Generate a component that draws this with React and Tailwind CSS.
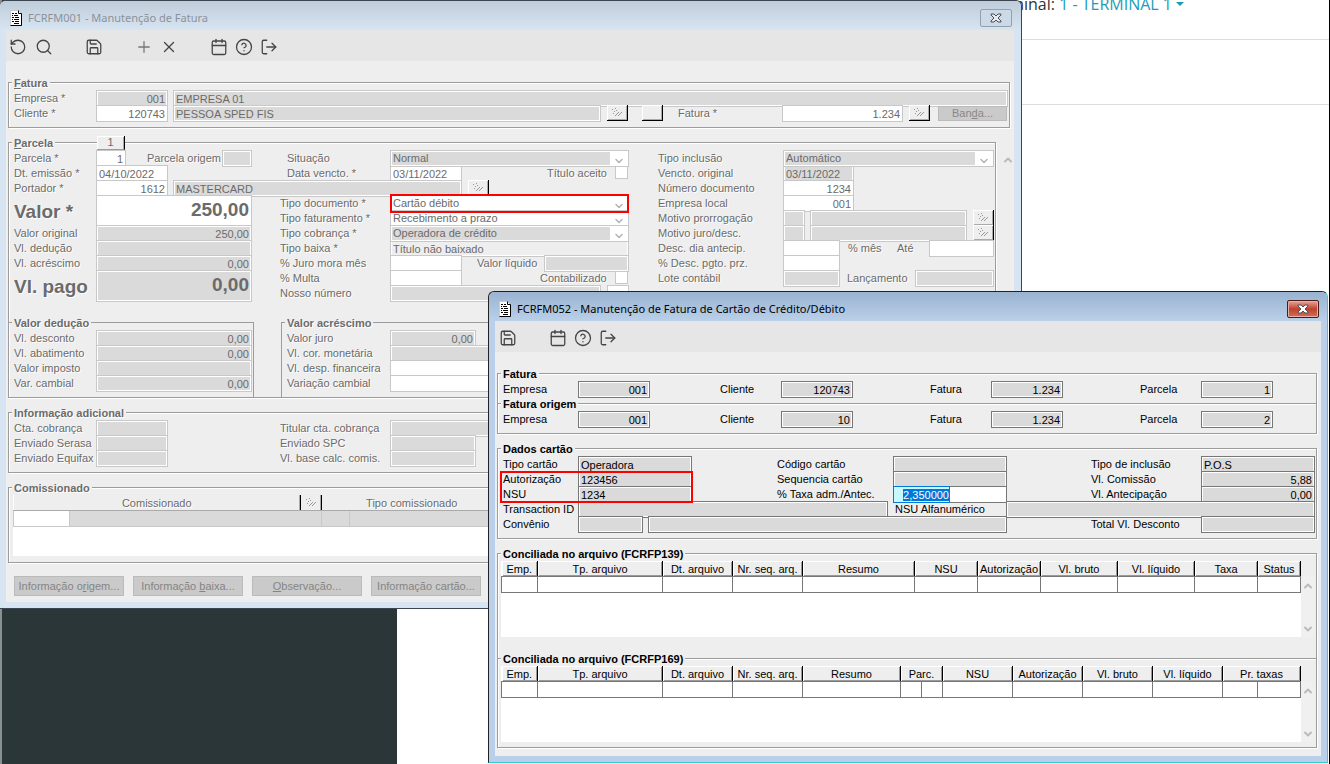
import React, { useEffect, useRef } from 'react';
import {
  Calendar,
  ChevronDown,
  ChevronUp,
  CircleHelp,
  LogOut,
  Plus,
  RotateCcw,
  Save,
  Search,
  X,
} from 'lucide-react';

const Label = ({ id, className = '', children }) => (
  <label htmlFor={id} className={`shrink-0 whitespace-nowrap leading-[17px] ${className}`}>
    {children}
  </label>
);

const tones = {
  gray: 'bg-[#dadada]',
  white: 'bg-white',
  flat: 'bg-[#eee]',
};

const Field = ({ id, label, value = '', tone = 'gray', right, big, className = '' }) => (
  <input
    id={id}
    aria-label={label}
    defaultValue={value}
    readOnly={tone !== 'white'}
    className={`block min-w-0 border border-(--line) px-0.5 shadow-[inset_0_0_0_1px_#fff] outline-none ${big ? 'h-8 pb-0.5 text-[19px] font-bold' : 'h-[17px] pt-px leading-[13px]'} ${tones[tone]} ${right ? 'text-right' : ''} ${className}`}
  />
);

const Select = ({ id, value, tone = 'gray', className = '' }) => (
  <div className={`relative h-[17px] ${className}`}>
    <select
      id={id}
      className={`block h-[17px] w-full appearance-none border border-(--line) px-0.5 leading-[13px] shadow-[inset_0_0_0_1px_#fff] outline-none ${tones[tone]}`}
    >
      <option>{value}</option>
    </select>
    <span className="pointer-events-none absolute inset-y-px right-px flex w-[18px] items-center justify-center bg-white">
      <ChevronDown className="mt-1 size-3 text-[#b4b4b4]" strokeWidth={3} />
    </span>
  </div>
);

const Check = ({ id }) => (
  <input
    id={id}
    type="checkbox"
    className="mt-px block size-[13px] shrink-0 appearance-none border border-(--line) bg-white"
  />
);

const PencilDots = () => (
  <svg viewBox="0 0 12 9" className="h-[9px] w-3" fill="#999" shapeRendering="crispEdges">
    <path d="M1 1h1v1h-1zM3 3h1v1h-1zM4 0h1v1h-1zM5 2h1v1h-1zM2 5h1v1h-1z" />
    <path d="M7 4h1v1h-1zM6 5h1v1h-1zM5 6h1v1h-1zM4 7h1v1h-1zM10 4h1v1h-1zM9 5h1v1h-1zM8 6h1v1h-1zM7 7h1v1h-1z" />
  </svg>
);

const LookupButton = ({ label, empty, className = '' }) => (
  <button
    type="button"
    aria-label={label}
    className={`flex h-4 w-[21px] shrink-0 items-center justify-center border-r border-b border-black bg-[#eee] shadow-[inset_1px_1px_0_#fff,inset_-1px_-1px_0_#aaa] ${className}`}
  >
    {!empty && <PencilDots />}
  </button>
);

const Row = ({ className = '', children }) => (
  <div className={`flex h-[15px] items-start ${className}`}>{children}</div>
);

const Group = ({ title, border = 'border', inner, className = '', bodyClass = '', children }) => (
  <fieldset
    className={`min-w-0 border-[#9c9c9c] ${inner ? '' : 'shadow-[1px_1px_0_#fff,inset_1px_1px_0_#fff]'} ${border} ${className}`}
  >
    <legend className="ml-[3px] h-[15px] bg-[#eee] px-0.5 text-[11px] leading-[17px] font-bold whitespace-nowrap">
      {title}
    </legend>
    <div className={bodyClass}>{children}</div>
  </fieldset>
);

const DocIcon = () => (
  <svg viewBox="0 0 12 16" className="h-4 w-3">
    <path d="M0.5 0.5h8l3 3v12h-11z" fill="#fff" stroke="#ccc" />
    <path d="M11.5 3.5v12h-11" fill="none" stroke="#000" />
    <path d="M8.5 0.5v3h3" fill="none" stroke="#000" />
    <path
      d="M2 3.5h2M5 3.5h2M2 5.5h1M4 5.5h4M2 7.5h2M5 7.5h4M2 9.5h1M4 9.5h5M2 11.5h2M5 11.5h4M4 13.5h5"
      stroke="#000"
      strokeWidth="1.2"
    />
  </svg>
);

const CloseGlyph = ({ fill }) => (
  <svg viewBox="0 0 12 10" className="h-[10px] w-3">
    <path
      d="M1 1h3l2 2 2-2h3v1L8 5l3 3v1H8L6 7 4 9H1V8l3-3-3-3z"
      fill={fill}
      stroke="#4a4f5c"
      strokeWidth="1"
    />
  </svg>
);

const ToolButton = ({ icon: Icon, label, color = 'text-[#444]', className = '' }) => (
  <button type="button" aria-label={label} className={`${color} ${className}`}>
    <Icon className="size-[18px]" strokeWidth={1.7} />
  </button>
);

const ScrollBar = ({ down, className = '' }) => (
  <div className={`flex w-[13px] shrink-0 flex-col items-center justify-between text-[#bbb] ${className}`}>
    <ChevronUp className="size-3" strokeWidth={4} />
    {down && <ChevronDown className="size-3" strokeWidth={4} />}
  </div>
);

const FaturaWindow = () => (
  <section className="absolute top-0 right-[307px] left-0 rounded-t-md border-t border-r border-b border-[#3c4650] bg-[#d7e4f2] pr-[7px] pb-1.5 pl-1.5 text-[#6b6b6b] [--line:#c8c8c8]">
    <div className="-mr-[7px] -ml-1.5 flex h-[29px] items-center rounded-t-md bg-linear-to-b from-[#bfcddb] to-[#d7e4f2] pt-1 pr-[9px] pl-2.5">
      <DocIcon />
      <h1 className="ml-1.5 flex-1 font-['Noto_Sans',sans-serif] text-[11px] text-[#8b929a]">
        FCRFM001 - Manutenção de Fatura
      </h1>
      <button
        type="button"
        aria-label="Fechar"
        className="flex h-[18px] w-8 items-center justify-center rounded-xs border border-[#94a0ae] bg-[#ccd9e6]"
      >
        <CloseGlyph fill="#e8ecf0" />
      </button>
    </div>
    <div className="bg-[#eee]">
      <div className="flex h-[31px] items-center bg-[#e6e6e6] pt-0.5 pl-[3px]">
        <ToolButton icon={RotateCcw} label="Desfazer" />
        <ToolButton icon={Search} label="Pesquisar" className="ml-2" />
        <ToolButton icon={Save} label="Salvar" className="ml-8" />
        <ToolButton icon={Plus} label="Incluir" color="text-[#777]" className="ml-8" />
        <ToolButton icon={X} label="Excluir" className="ml-[7px]" />
        <ToolButton icon={Calendar} label="Calendário" className="ml-8" />
        <ToolButton icon={CircleHelp} label="Ajuda" className="ml-[7px]" />
        <ToolButton icon={LogOut} label="Sair" className="ml-[7px]" />
      </div>

      <div className="pt-[14px] pr-1 pl-0.5 [text-shadow:1px_1px_0_#fff]">
        <Group title={<><u>F</u>atura</>} bodyClass="pr-px pb-[7px] pl-[5px]">
          <Row>
            <Label id="empresa" className="w-[82px]">Empresa *</Label>
            <Field id="empresa" value="001" right className="w-[72px]" />
            <Field label="Nome da empresa" value="EMPRESA 01" className="ml-[5px] flex-1" />
          </Row>
          <Row>
            <Label id="cliente" className="w-[82px]">Cliente *</Label>
            <Field id="cliente" value="120743" right tone="white" className="w-[72px]" />
            <Field label="Nome do cliente" value="PESSOA SPED FIS" className="ml-[5px] flex-1" />
            <LookupButton label="Buscar cliente" className="ml-1.5" />
            <LookupButton label="Detalhe do cliente" empty className="ml-[14px]" />
            <Label id="fatura" className="ml-[15px] w-[104px]">Fatura *</Label>
            <Field id="fatura" value="1.234" right tone="white" className="w-[121px]" />
            <LookupButton label="Buscar fatura" className="ml-1.5" />
            <button
              type="button"
              className="mt-px mr-px ml-2 h-[15px] w-[69px] border border-[#bbb] bg-[#cacaca] leading-[13px] text-[#888] [text-shadow:none]"
            >
              Ban<u>d</u>a...
            </button>
          </Row>
        </Group>

        <div className="mt-[7px] -mr-1 flex">
          <div className="relative min-w-0 flex-1">
            <Group title={<><u>P</u>arcela</>}>
              <div className="flex pl-[5px]">
                <div className="w-[644px] shrink-0">
                  <Row>
                    <Label id="parcela" className="w-[82px]">Parcela *</Label>
                    <Field id="parcela" value="1" right tone="white" className="w-[30px]" />
                    <Label id="parcela-origem" className="ml-[21px] w-[75px]">Parcela origem</Label>
                    <Field id="parcela-origem" className="w-[30px]" />
                    <Label id="situacao" className="ml-[35px] w-[103px]">Situação</Label>
                    <Select id="situacao" value="Normal" className="w-[239px]" />
                  </Row>
                  <Row>
                    <Label id="emissao" className="w-[82px]">Dt. emissão *</Label>
                    <Field id="emissao" value="04/10/2022" tone="white" className="w-[72px]" />
                    <Label id="vencto" className="ml-[119px] w-[103px]">Data vencto. *</Label>
                    <Field id="vencto" value="03/11/2022" tone="white" className="w-[72px]" />
                    <Label id="aceito" className="ml-[85px] w-[68px]">Título aceito</Label>
                    <Check id="aceito" />
                  </Row>
                  <Row>
                    <Label id="portador" className="w-[82px]">Portador *</Label>
                    <Field id="portador" value="1612" right tone="white" className="w-[72px]" />
                    <Field label="Nome do portador" value="MASTERCARD" className="ml-[5px] w-[289px]" />
                    <LookupButton label="Buscar portador" className="ml-1.5" />
                  </Row>
                  <div className="flex">
                    <div className="w-[266px]">
                      <div className="flex h-[30px]">
                        <Label id="valor" className="w-[82px] pt-2 text-[19px] font-bold">Valor *</Label>
                        <Field id="valor" value="250,00" right big tone="white" className="w-[156px]" />
                      </div>
                      <Row>
                        <Label id="valor-original" className="w-[82px]">Valor original</Label>
                        <Field id="valor-original" value="250,00" right className="w-[156px]" />
                      </Row>
                      <Row>
                        <Label id="vl-deducao" className="w-[82px]">Vl. dedução</Label>
                        <Field id="vl-deducao" className="w-[156px]" />
                      </Row>
                      <Row>
                        <Label id="vl-acrescimo" className="w-[82px]">Vl. acréscimo</Label>
                        <Field id="vl-acrescimo" value="0,00" right className="w-[156px]" />
                      </Row>
                      <div className="flex h-[30px]">
                        <Label id="vl-pago" className="w-[82px] pt-2 text-[19px] font-bold">Vl. pago</Label>
                        <Field id="vl-pago" value="0,00" right big className="w-[156px]" />
                      </div>
                    </div>
                    <div className="w-[349px]">
                      <Row className="relative">
                        <Label id="tipo-doc" className="w-[110px]">Tipo documento *</Label>
                        <Select id="tipo-doc" value="Cartão débito" tone="white" className="flex-1" />
                        <span className="pointer-events-none absolute -top-px right-0 z-10 h-[19px] w-[239px] border-2 border-[#f00]" />
                      </Row>
                      <Row>
                        <Label id="tipo-fat" className="w-[110px]">Tipo faturamento *</Label>
                        <Select id="tipo-fat" value="Recebimento a prazo" tone="white" className="flex-1" />
                      </Row>
                      <Row>
                        <Label id="tipo-cob" className="w-[110px]">Tipo cobrança *</Label>
                        <Select id="tipo-cob" value="Operadora de crédito" className="flex-1" />
                      </Row>
                      <Row>
                        <Label id="tipo-baixa" className="w-[110px]">Tipo baixa *</Label>
                        <Field id="tipo-baixa" value="Título não baixado" tone="flat" className="flex-1" />
                      </Row>
                      <Row>
                        <Label id="juro-mora" className="w-[110px]">% Juro mora mês</Label>
                        <Field id="juro-mora" tone="white" className="w-[72px]" />
                        <Label id="valor-liquido" className="ml-[15px] w-[67px]">Valor líquido</Label>
                        <Field id="valor-liquido" className="flex-1" />
                      </Row>
                      <Row>
                        <Label id="multa" className="w-[110px]">% Multa</Label>
                        <Field id="multa" tone="white" className="w-[72px]" />
                        <Label id="contab" className="ml-[78px] w-[75px]">Contabilizado</Label>
                        <Check id="contab" />
                      </Row>
                      <Row>
                        <Label id="nosso-num" className="w-[110px]">Nosso número</Label>
                        <Field id="nosso-num" className="w-[212px]" />
                        <Field label="Dígito" tone="white" className="ml-1.5 w-[22px]" />
                      </Row>
                    </div>
                  </div>
                </div>

                <div className="min-w-0 flex-1 pr-px">
                  <Row>
                    <Label id="tipo-inc" className="w-[125px]">Tipo inclusão</Label>
                    <Select id="tipo-inc" value="Automático" className="flex-1" />
                  </Row>
                  <Row>
                    <Label id="venc-orig" className="w-[125px]">Vencto. original</Label>
                    <Field id="venc-orig" value="03/11/2022" className="w-[71px]" />
                  </Row>
                  <Row>
                    <Label id="num-doc" className="w-[125px]">Número documento</Label>
                    <Field id="num-doc" value="1234" right tone="white" className="w-[71px]" />
                  </Row>
                  <Row>
                    <Label id="emp-local" className="w-[125px]">Empresa local</Label>
                    <Field id="emp-local" value="001" right tone="white" className="w-[71px]" />
                  </Row>
                  <Row>
                    <Label id="mot-pror" className="w-[125px]">Motivo prorrogação</Label>
                    <Field id="mot-pror" className="w-[22px]" />
                    <Field label="Descrição da prorrogação" className="ml-[5px] flex-1" />
                    <LookupButton label="Buscar prorrogação" className="ml-1.5" />
                  </Row>
                  <Row>
                    <Label id="mot-juro" className="w-[125px]">Motivo juro/desc.</Label>
                    <Field id="mot-juro" className="w-[22px]" />
                    <Field label="Descrição do juro" className="ml-[5px] flex-1" />
                    <LookupButton label="Buscar juro" className="ml-1.5" />
                  </Row>
                  <Row>
                    <Label id="desc-dia" className="w-[125px]">Desc. dia antecip.</Label>
                    <Field id="desc-dia" tone="white" className="w-[57px]" />
                    <span className="ml-2 w-[49px] leading-[17px]">% mês</span>
                    <Label id="ate" className="w-8">Até</Label>
                    <Field id="ate" tone="white" className="flex-1" />
                  </Row>
                  <Row>
                    <Label id="desc-pgto" className="w-[125px]">% Desc. pgto. prz.</Label>
                    <Field id="desc-pgto" tone="white" className="w-[57px]" />
                  </Row>
                  <Row>
                    <Label id="lote" className="w-[125px]">Lote contábil</Label>
                    <Field id="lote" className="w-[57px]" />
                    <Label id="lancamento" className="ml-[7px] w-[68px]">Lançamento</Label>
                    <Field id="lancamento" className="flex-1" />
                  </Row>
                </div>
              </div>

              <div className="mt-[15px] flex">
                <Group title="Valor dedução" border="border-t border-r" inner className="w-[245px]" bodyClass="pr-px pb-[7px] pl-[5px]">
                  <Row>
                    <Label id="vl-desc" className="w-[82px]">Vl. desconto</Label>
                    <Field id="vl-desc" value="0,00" right className="flex-1" />
                  </Row>
                  <Row>
                    <Label id="vl-abat" className="w-[82px]">Vl. abatimento</Label>
                    <Field id="vl-abat" value="0,00" right className="flex-1" />
                  </Row>
                  <Row>
                    <Label id="vl-imposto" className="w-[82px]">Valor imposto</Label>
                    <Field id="vl-imposto" className="flex-1" />
                  </Row>
                  <Row>
                    <Label id="var-cambial" className="w-[82px]">Var. cambial</Label>
                    <Field id="var-cambial" value="0,00" right className="flex-1" />
                  </Row>
                </Group>
                <Group title="Valor acréscimo" border="border-t border-l" inner className="ml-[27px] flex-1" bodyClass="pb-[7px] pl-[5px]">
                  <Row>
                    <Label id="vl-juro" className="w-[103px]">Valor juro</Label>
                    <Field id="vl-juro" value="0,00" right className="w-[86px]" />
                  </Row>
                  <Row>
                    <Label id="cor-mon" className="w-[103px]">Vl. cor. monetária</Label>
                    <Field id="cor-mon" className="w-[240px]" />
                  </Row>
                  <Row>
                    <Label id="desp-fin" className="w-[103px]">Vl. desp. financeira</Label>
                    <Field id="desp-fin" tone="white" className="w-[240px]" />
                  </Row>
                  <Row>
                    <Label id="variacao" className="w-[103px]">Variação cambial</Label>
                    <Field id="variacao" tone="white" className="w-[240px]" />
                  </Row>
                </Group>
              </div>
            </Group>
            <button
              type="button"
              className="absolute top-px left-[89px] h-[14px] w-7 border-r border-b border-black border-b-[#9c9c9c] bg-[#eee] leading-[13px] shadow-[inset_1px_1px_0_#fff,inset_-1px_0_0_#aaa]"
            >
              1
            </button>
          </div>
          <ScrollBar className="ml-[5px] pt-[19px]" />
        </div>

        <Group title="Informação adicional" className="mt-[7px]" bodyClass="pb-[7px] pl-[5px]">
          <Row>
            <Label id="cta-cob" className="w-[82px]">Cta. cobrança</Label>
            <Field id="cta-cob" className="w-[72px]" />
            <Label id="titular" className="ml-28 w-[110px]">Titular cta. cobrança</Label>
            <Field id="titular" className="w-[240px]" />
          </Row>
          <Row>
            <Label id="serasa" className="w-[82px]">Enviado Serasa</Label>
            <Field id="serasa" className="w-[72px]" />
            <Label id="spc" className="ml-28 w-[110px]">Enviado SPC</Label>
            <Field id="spc" className="w-[86px]" />
          </Row>
          <Row>
            <Label id="equifax" className="w-[82px]">Enviado Equifax</Label>
            <Field id="equifax" className="w-[72px]" />
            <Label id="base-calc" className="ml-28 w-[110px]">Vl. base calc. comis.</Label>
            <Field id="base-calc" className="w-[86px]" />
          </Row>
        </Group>

        <Group title="Comissionado" className="mt-[7px]" bodyClass="px-1 pb-1.5">
          <div className="h-[61px] bg-white">
            <table className="w-full table-fixed border-collapse">
              <colgroup>
                <col className="w-14" />
                <col className="w-[231px]" />
                <col className="w-[21px]" />
                <col className="w-7" />
                <col className="w-[152px]" />
                <col />
              </colgroup>
              <thead>
                <tr className="h-[15px] bg-[#eee]">
                  <th colSpan={2} className="border-r border-b border-black border-b-[#aaa] p-0 pt-px leading-[14px] font-normal shadow-[inset_-1px_0_0_#aaa]">Comissionado</th>
                  <th className="border-r border-b border-black border-b-[#aaa] p-0 shadow-[inset_-1px_0_0_#aaa]">
                    <span className="flex justify-center"><PencilDots /></span>
                  </th>
                  <th colSpan={2} className="border-b border-[#aaa] p-0 pt-px leading-[14px] font-normal">Tipo comissionado</th>
                  <th className="border-b border-[#aaa] p-0" />
                </tr>
              </thead>
              <tbody>
                <tr className="h-4">
                  <td className="border border-(--line) bg-white p-0" />
                  <td colSpan={2} className="border border-(--line) bg-[#dadada] p-0" />
                  <td className="border border-(--line) bg-[#dadada] p-0" />
                  <td colSpan={2} className="border border-(--line) bg-[#dadada] p-0" />
                </tr>
              </tbody>
            </table>
          </div>
        </Group>

        <div className="flex gap-[9px] pt-[13px] pb-1.5 pl-1.5 text-[#858585] [text-shadow:none]">
          <button type="button" className="h-5 w-[110px] border border-[#bbb] bg-[#cacaca]">Informação o<u>r</u>igem...</button>
          <button type="button" className="h-5 w-[110px] border border-[#bbb] bg-[#cacaca]">Informação <u>b</u>aixa...</button>
          <button type="button" className="h-5 w-[110px] border border-[#bbb] bg-[#cacaca]"><u>O</u>bservação...</button>
          <button type="button" className="h-5 w-[110px] border border-[#bbb] bg-[#cacaca]">Informação cartão...</button>
        </div>
      </div>
    </div>
  </section>
);

const CardRow = ({ prefix, values }) => (
  <Row>
    <Label id={`${prefix}-empresa`} className="w-[75px]">Empresa</Label>
    <Field id={`${prefix}-empresa`} value={values[0]} right className="w-[72px]" />
    <Label id={`${prefix}-cliente`} className="ml-[70px] w-[61px]">Cliente</Label>
    <Field id={`${prefix}-cliente`} value={values[1]} right className="w-[72px]" />
    <Label id={`${prefix}-fatura`} className="ml-[77px] w-[61px]">Fatura</Label>
    <Field id={`${prefix}-fatura`} value={values[2]} right className="w-[72px]" />
    <Label id={`${prefix}-parcela`} className="ml-[77px] w-[61px]">Parcela</Label>
    <Field id={`${prefix}-parcela`} value={values[3]} right className="w-[72px]" />
  </Row>
);

// cols: [widths of the cells below the title, title]
const GridTable = ({ cols }) => (
  <div className="mr-0.5 ml-[3px] flex h-[76px]">
    <div className="min-w-0 flex-1 bg-white">
      <table className="w-full table-fixed border-collapse">
        <colgroup>
          {cols.flatMap(([widths]) => widths).map((w, i) => (
            <col key={i} style={{ width: w }} />
          ))}
        </colgroup>
        <thead>
          <tr className="h-[15px] bg-[#eee]">
            {cols.map(([widths, title]) => (
              <th
                key={title}
                colSpan={widths.length}
                className="border-r border-b border-black border-b-[#777] p-0 pt-px leading-[14px] font-normal whitespace-nowrap shadow-[inset_1px_1px_0_#fff,inset_-1px_-1px_0_#999]"
              >
                {title}
              </th>
            ))}
          </tr>
        </thead>
        <tbody>
          <tr className="h-4">
            {cols.flatMap(([widths]) => widths).map((w, i) => (
              <td key={i} className="border border-[#777] p-0" />
            ))}
          </tr>
        </tbody>
      </table>
    </div>
    <ScrollBar down className="mt-[15px] bg-[#f0f0f0] pt-1 pb-0.5" />
  </div>
);

const fcrfp139 = [
  [[36], 'Emp.'],
  [[125], 'Tp. arquivo'],
  [[70], 'Dt. arquivo'],
  [[70], 'Nr. seq. arq.'],
  [[112], 'Resumo'],
  [[63], 'NSU'],
  [[63], 'Autorização'],
  [[77], 'Vl. bruto'],
  [[77], 'Vl. líquido'],
  [[63], 'Taxa'],
  [[43], 'Status'],
];

const fcrfp169 = [
  [[36], 'Emp.'],
  [[125], 'Tp. arquivo'],
  [[70], 'Dt. arquivo'],
  [[70], 'Nr. seq. arq.'],
  [[98], 'Resumo'],
  [[21, 21], 'Parc.'],
  [[70], 'NSU'],
  [[70], 'Autorização'],
  [[70], 'Vl. bruto'],
  [[70], 'Vl. líquido'],
  [[35, 43], 'Pr. taxas'],
];

const CartaoWindow = () => {
  const taxaRef = useRef(null);

  useEffect(() => {
    taxaRef.current?.focus();
    taxaRef.current?.select();
  }, []);

  return (
    <section className="absolute top-[291px] right-px left-[488px] rounded-t-md border border-[#222] border-r-[#3cc] border-b-[#3cc] bg-[#bad0ea] px-1.5 pb-1.5 text-black [--line:#777]">
      <div className="-mx-1.5 flex h-[29px] items-center rounded-t-md bg-linear-to-b from-[#99b3d0] to-[#bad0ea] pt-1 pr-2 pl-2.5">
        <DocIcon />
        <h2 className="ml-1.5 flex-1 font-['Noto_Sans',sans-serif] text-[11px]">
          FCRFM052 - Manutenção de Fatura de Cartão de Crédito/Débito
        </h2>
        <button
          type="button"
          aria-label="Fechar"
          className="flex h-[18px] w-8 items-center justify-center rounded-xs border border-[#4d1a1a] bg-linear-to-b from-[#e5a397] via-[#c0402c] to-[#d0705a] shadow-[inset_0_0_0_1px_#e8b0a4]"
        >
          <CloseGlyph fill="#fff" />
        </button>
      </div>
      <div className="bg-[#eee]">
        <div className="flex h-[31px] items-center bg-[#e6e6e6] pt-0.5 pl-1">
          <ToolButton icon={Save} label="Salvar" />
          <ToolButton icon={Calendar} label="Calendário" className="ml-8" />
          <ToolButton icon={CircleHelp} label="Ajuda" className="ml-[7px]" />
          <ToolButton icon={LogOut} label="Sair" className="ml-[7px]" />
        </div>

        <div className="pt-[14px] pr-1 pb-2 pl-0.5">
          <Group title="Fatura" border="border border-b-0" className="-mb-2" bodyClass="pb-2 pl-[5px]">
            <CardRow prefix="atual" values={['001', '120743', '1.234', '1']} />
          </Group>
          <Group title="Fatura origem" bodyClass="pb-[7px] pl-[5px]">
            <CardRow prefix="origem" values={['001', '10', '1.234', '2']} />
          </Group>

          <Group title="Dados cartão" className="mt-[7px]" bodyClass="pr-px pb-[7px] pl-[5px]">
            <div className="relative">
              <Row>
                <Label id="tipo-cartao" className="w-[75px]">Tipo cartão</Label>
                <Field id="tipo-cartao" value="Operadora" className="w-[114px]" />
                <Label id="cod-cartao" className="ml-[85px] w-[116px]">Código cartão</Label>
                <Field id="cod-cartao" className="w-[114px]" />
                <Label id="tipo-inclusao" className="ml-[84px] w-[110px]">Tipo de inclusão</Label>
                <Field id="tipo-inclusao" value="P.O.S" className="flex-1" />
              </Row>
              <Row>
                <Label id="autorizacao" className="w-[75px]">Autorização</Label>
                <Field id="autorizacao" value="123456" className="w-[114px]" />
                <Label id="seq-cartao" className="ml-[85px] w-[116px]">Sequencia cartão</Label>
                <Field id="seq-cartao" className="w-[114px]" />
                <Label id="vl-comissao" className="ml-[84px] w-[110px]">Vl. Comissão</Label>
                <Field id="vl-comissao" value="5,88" right className="flex-1" />
              </Row>
              <Row>
                <Label id="nsu" className="w-[75px]">NSU</Label>
                <Field id="nsu" value="1234" className="w-[114px]" />
                <Label id="taxa" className="ml-[85px] w-[116px]">% Taxa adm./Antec.</Label>
                <div className="flex h-[17px] w-[114px] border border-(--line) bg-white">
                  <input
                    id="taxa"
                    ref={taxaRef}
                    defaultValue="2,350000"
                    className="-my-px -ml-px h-[17px] w-[57px] border border-[#0078d7] bg-[#c8f8ff] pt-px text-right leading-[13px] outline-none selection:bg-[#0078d7] selection:text-white"
                  />
                </div>
                <Label id="vl-antecipacao" className="ml-[84px] w-[110px]">Vl. Antecipação</Label>
                <Field id="vl-antecipacao" value="0,00" right className="flex-1" />
              </Row>
              <Row>
                <Label id="transaction" className="w-[75px]">Transaction ID</Label>
                <Field id="transaction" className="w-[310px]" />
                <Label id="nsu-alfa" className="ml-[7px] w-[111px]">NSU Alfanumérico</Label>
                <Field id="nsu-alfa" className="flex-1" />
              </Row>
              <Row>
                <Label id="convenio" className="w-[75px]">Convênio</Label>
                <Field id="convenio" className="w-[65px]" />
                <Field label="Nome do convênio" className="ml-[5px] w-[359px]" />
                <Label id="total-desc" className="ml-[84px] w-[110px]">Total Vl. Desconto</Label>
                <Field id="total-desc" className="flex-1" />
              </Row>
              <span className="pointer-events-none absolute top-[15px] -left-[3px] h-8 w-[193px] border-2 border-[#f00]" />
            </div>
          </Group>

          <Group title="Conciliada no arquivo (FCRFP139)" border="border border-b-0" className="mt-[7px] -mb-2" bodyClass="pb-[22px]">
            <GridTable cols={fcrfp139} />
          </Group>
          <Group title="Conciliada no arquivo (FCRFP169)" bodyClass="pb-[5px]">
            <GridTable cols={fcrfp169} />
          </Group>
        </div>
      </div>
    </section>
  );
};

const App = () => (
  <div className="relative flex min-h-screen overflow-hidden border-r border-black bg-white font-['Liberation_Sans',Arial,sans-serif] text-[11px] leading-[15px]">
    <aside className="w-[397px] shrink-0 border-l-2 border-[#8a8f90] bg-[#2b3638]" />
    <main className="min-w-0 flex-1">
      <header className="h-10 overflow-hidden border-b border-[#ddd]">
        <p className="-mt-2 flex items-center justify-end pr-[145px] font-['Open_Sans',sans-serif] text-base leading-6 text-[#333]">
          Terminal:&nbsp;
          <a href="#terminal" className="flex items-center text-[#1a9cb8]">
            1 - TERMINAL 1
            <svg viewBox="0 0 8 4" className="ml-1 h-1 w-2">
              <path d="M0 0h8L4 4z" fill="currentColor" />
            </svg>
          </a>
        </p>
      </header>
      <div className="h-[65px] border-b border-[#ddd]" />
    </main>
    <FaturaWindow />
    <CartaoWindow />
  </div>
);

export default App;
